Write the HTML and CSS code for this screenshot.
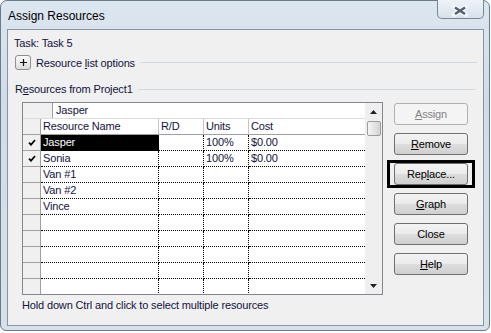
FILE: index.html
```html
<!DOCTYPE html>
<html lang="en">
<head>
  <meta charset="UTF-8">
  <title>Assign Resources</title>
  <link rel="stylesheet" href="styles.css">
</head>
<body>
  <div class="window">
    <div class="titlebar">
      <span class="title">Assign Resources</span>
      <span class="close">
        <svg width="45" height="18" viewBox="0 0 45 18">
          <path d="M16.5 7 L27.5 14.5 M27.5 7 L16.5 14.5" stroke="#f4f7fa" stroke-width="5" stroke-linecap="round"/>
          <path d="M17 7.5 L27 14 M27 7.5 L17 14" stroke="#56616f" stroke-width="2.4"/>
        </svg>
      </span>
    </div>

    <div class="client">
      <div class="task">Task: Task 5</div>

      <div class="options">
        <span class="expander">
          <svg width="9" height="9" viewBox="0 0 9 9"><path d="M4.5 1 V8 M1 4.5 H8" stroke="#111" stroke-width="1.2"/></svg>
        </span>
        <span class="label">Resource <u>l</u>ist options</span>
        <span class="rule"></span>
      </div>

      <div class="section">
        <span class="label">R<u>e</u>sources from Project1</span>
        <span class="rule"></span>
      </div>

      <div class="main">
        <div class="grid">
          <div class="sheet">
            <div class="entry">
              <div class="corner"></div>
              <div class="entry-value">Jasper</div>
            </div>
            <div class="row head">
              <div class="rh"></div>
              <div class="cell name">Resource Name</div>
              <div class="cell rd">R/D</div>
              <div class="cell units">Units</div>
              <div class="cell cost">Cost</div>
            </div>
            <div class="row">
              <div class="rh"><svg class="check" width="8" height="7" viewBox="0 0 8 7"><path d="M1 3.6 L3 5.8 L7 1" stroke="#000" stroke-width="1.7" fill="none"/></svg></div>
              <div class="cell name sel">Jasper</div>
              <div class="cell rd"></div>
              <div class="cell units">100%</div>
              <div class="cell cost">$0.00</div>
            </div>
            <div class="row">
              <div class="rh"><svg class="check" width="8" height="7" viewBox="0 0 8 7"><path d="M1 3.6 L3 5.8 L7 1" stroke="#000" stroke-width="1.7" fill="none"/></svg></div>
              <div class="cell name">Sonia</div>
              <div class="cell rd"></div>
              <div class="cell units">100%</div>
              <div class="cell cost">$0.00</div>
            </div>
            <div class="row">
              <div class="rh"></div>
              <div class="cell name">Van #1</div>
              <div class="cell rd"></div>
              <div class="cell units"></div>
              <div class="cell cost"></div>
            </div>
            <div class="row">
              <div class="rh"></div>
              <div class="cell name">Van #2</div>
              <div class="cell rd"></div>
              <div class="cell units"></div>
              <div class="cell cost"></div>
            </div>
            <div class="row">
              <div class="rh"></div>
              <div class="cell name">Vince</div>
              <div class="cell rd"></div>
              <div class="cell units"></div>
              <div class="cell cost"></div>
            </div>
            <div class="row">
              <div class="rh"></div><div class="cell name"></div><div class="cell rd"></div><div class="cell units"></div><div class="cell cost"></div>
            </div>
            <div class="row">
              <div class="rh"></div><div class="cell name"></div><div class="cell rd"></div><div class="cell units"></div><div class="cell cost"></div>
            </div>
            <div class="row">
              <div class="rh"></div><div class="cell name"></div><div class="cell rd"></div><div class="cell units"></div><div class="cell cost"></div>
            </div>
            <div class="row">
              <div class="rh"></div><div class="cell name"></div><div class="cell rd"></div><div class="cell units"></div><div class="cell cost"></div>
            </div>
            <div class="row">
              <div class="rh"></div><div class="cell name"></div><div class="cell rd"></div><div class="cell units"></div><div class="cell cost"></div>
            </div>
          </div>
          <div class="scrollbar">
            <div class="arrow"><svg width="7" height="4" viewBox="0 0 7 4"><path d="M0 4 L3.5 0 L7 4 Z" fill="#222"/></svg></div>
            <div class="thumb"></div>
            <div class="track"></div>
            <div class="arrow"><svg width="7" height="4" viewBox="0 0 7 4"><path d="M0 0 L3.5 4 L7 0 Z" fill="#222"/></svg></div>
          </div>
        </div>

        <div class="buttons">
          <button class="btn disabled"><u>A</u>ssign</button>
          <button class="btn"><u>R</u>emove</button>
          <div class="focus"><button class="btn">Rep<u>l</u>ace...</button></div>
          <button class="btn"><u>G</u>raph</button>
          <button class="btn">Close</button>
          <button class="btn"><u>H</u>elp</button>
        </div>
      </div>

      <div class="hint">Hold down Ctrl and click to select multiple resources</div>
    </div>
  </div>
</body>
</html>
```

FILE: styles.css
```css
body {
  margin: 0;
  background: #fff;
  font-family: "Liberation Sans", Arial, sans-serif;
}

.window {
  width: 490px;
  height: 331px;
  box-sizing: border-box;
  border: 1px solid #6c7986;
  border-radius: 7px 7px 6px 6px;
  background: linear-gradient(180deg, #dce6f0 0%, #d0dce8 30%, #d7e1eb 100%);
  padding: 0 5px 4px 6px;
  display: flex;
  flex-direction: column;
}

.titlebar {
  height: 28px;
  display: flex;
  justify-content: space-between;
  align-items: flex-start;
}

.title {
  padding: 8px 0 0 1px;
  font-size: 12px;
  line-height: 15px;
  color: #000;
}

.close {
  width: 47px;
  height: 19px;
  margin-top: -1px;
  box-sizing: border-box;
  border: 1px solid #7a8694;
  border-top: none;
  border-radius: 0 0 5px 5px;
  background: linear-gradient(180deg, #eef3f8, #d8e1eb);
  display: flex;
}

.client {
  height: 297px;
  box-sizing: border-box;
  border: 1px solid #8796a6;
  background: #f0f0f0;
  padding: 0 6px;
  font-size: 11px;
  letter-spacing: -0.15px;
  color: #12123e;
}

.task {
  margin-top: 6px;
  line-height: 14px;
}

.options {
  margin-top: 5px;
  height: 15px;
  display: flex;
  align-items: center;
}

.expander {
  width: 16px;
  height: 15px;
  box-sizing: border-box;
  margin-left: 1px;
  border: 1px solid #8f8f8f;
  border-radius: 3px;
  background: linear-gradient(180deg, #fcfcfc, #dcdcdc);
  display: flex;
  align-items: center;
  justify-content: center;
}

.options .label {
  margin-left: 5px;
}

.rule {
  flex: 1;
  height: 1px;
  margin-left: 5px;
  background: #d2dbe2;
}

.section {
  margin-top: 12px;
  height: 14px;
  padding-left: 1px;
  display: flex;
  align-items: center;
}

.section .rule {
  margin-right: 1px;
}

.main {
  margin-top: 6px;
  display: flex;
  align-items: flex-start;
}

.grid {
  margin-left: 8px;
  width: 361px;
  height: 193px;
  box-sizing: border-box;
  border: 1px solid #828790;
  background: #fff;
  display: flex;
}

.sheet {
  width: 342px;
  overflow: hidden;
}

.entry {
  display: flex;
  height: 16px;
  box-sizing: border-box;
  border-bottom: 1px solid #dcdcdc;
}

.corner {
  width: 30px;
  box-sizing: border-box;
  background: #f0f0f0;
  border-right: 1px solid #a0a0a0;
}

.entry-value {
  padding-left: 3px;
  line-height: 15px;
}

.row {
  display: flex;
  height: 16px;
}

.rh {
  width: 18px;
  height: 16px;
  box-sizing: border-box;
  background: #f0f0f0;
  border-right: 1px solid #a0a0a0;
  border-bottom: 1px solid #a0a0a0;
  display: flex;
  align-items: center;
  justify-content: center;
}

.cell {
  height: 16px;
  box-sizing: border-box;
  padding-left: 2px;
  line-height: 15px;
  white-space: nowrap;
  overflow: hidden;
  border-right: 1px dotted #000;
  border-bottom: 1px dotted #000;
}

.name { width: 118px; }
.rd { width: 45px; }
.units { width: 45px; }
.cost { width: 116px; border-right: none; }

.head .cell {
  background: #fff;
  border-right: 1px solid #c4c4c4;
  border-bottom: 1px solid #a0a0a0;
}

.head .cost {
  border-right: none;
}

.cell.sel {
  background: #000;
  color: #fff;
}

.scrollbar {
  width: 17px;
  background: #efefef;
  display: flex;
  flex-direction: column;
}

.arrow {
  height: 17px;
  display: flex;
  align-items: center;
  justify-content: center;
}

.thumb {
  width: 14px;
  height: 15px;
  margin: 1px 0 0 2px;
  box-sizing: border-box;
  border: 1px solid #9c9c9c;
  border-radius: 2px;
  background: linear-gradient(90deg, #f6f6f6, #e2e2e2 55%, #d4d4d4);
}

.track {
  flex: 1;
}

.buttons {
  margin-left: 4px;
  width: 88px;
  padding-top: 1px;
  display: flex;
  flex-direction: column;
  align-items: center;
}

.btn {
  width: 74px;
  height: 22px;
  margin-bottom: 8px;
  padding: 0;
  box-sizing: border-box;
  border: 1px solid #707070;
  border-radius: 3px;
  background: linear-gradient(180deg, #f3f3f3 0%, #ebebeb 48%, #dddddd 52%, #cfcfcf 100%);
  font-family: "Liberation Sans", Arial, sans-serif;
  font-size: 11px;
  letter-spacing: -0.15px;
  color: #000;
}

.btn.disabled {
  border-color: #adb2b5;
  background: #f4f4f4;
  color: #838383;
}

.focus {
  width: 88px;
  height: 28px;
  margin: -3px 0 5px;
  box-sizing: border-box;
  border: 3px solid #000;
  display: flex;
  justify-content: center;
}

.focus .btn {
  margin: 0;
}

.hint {
  margin-top: 3px;
  margin-left: 8px;
  line-height: 14px;
}
```
